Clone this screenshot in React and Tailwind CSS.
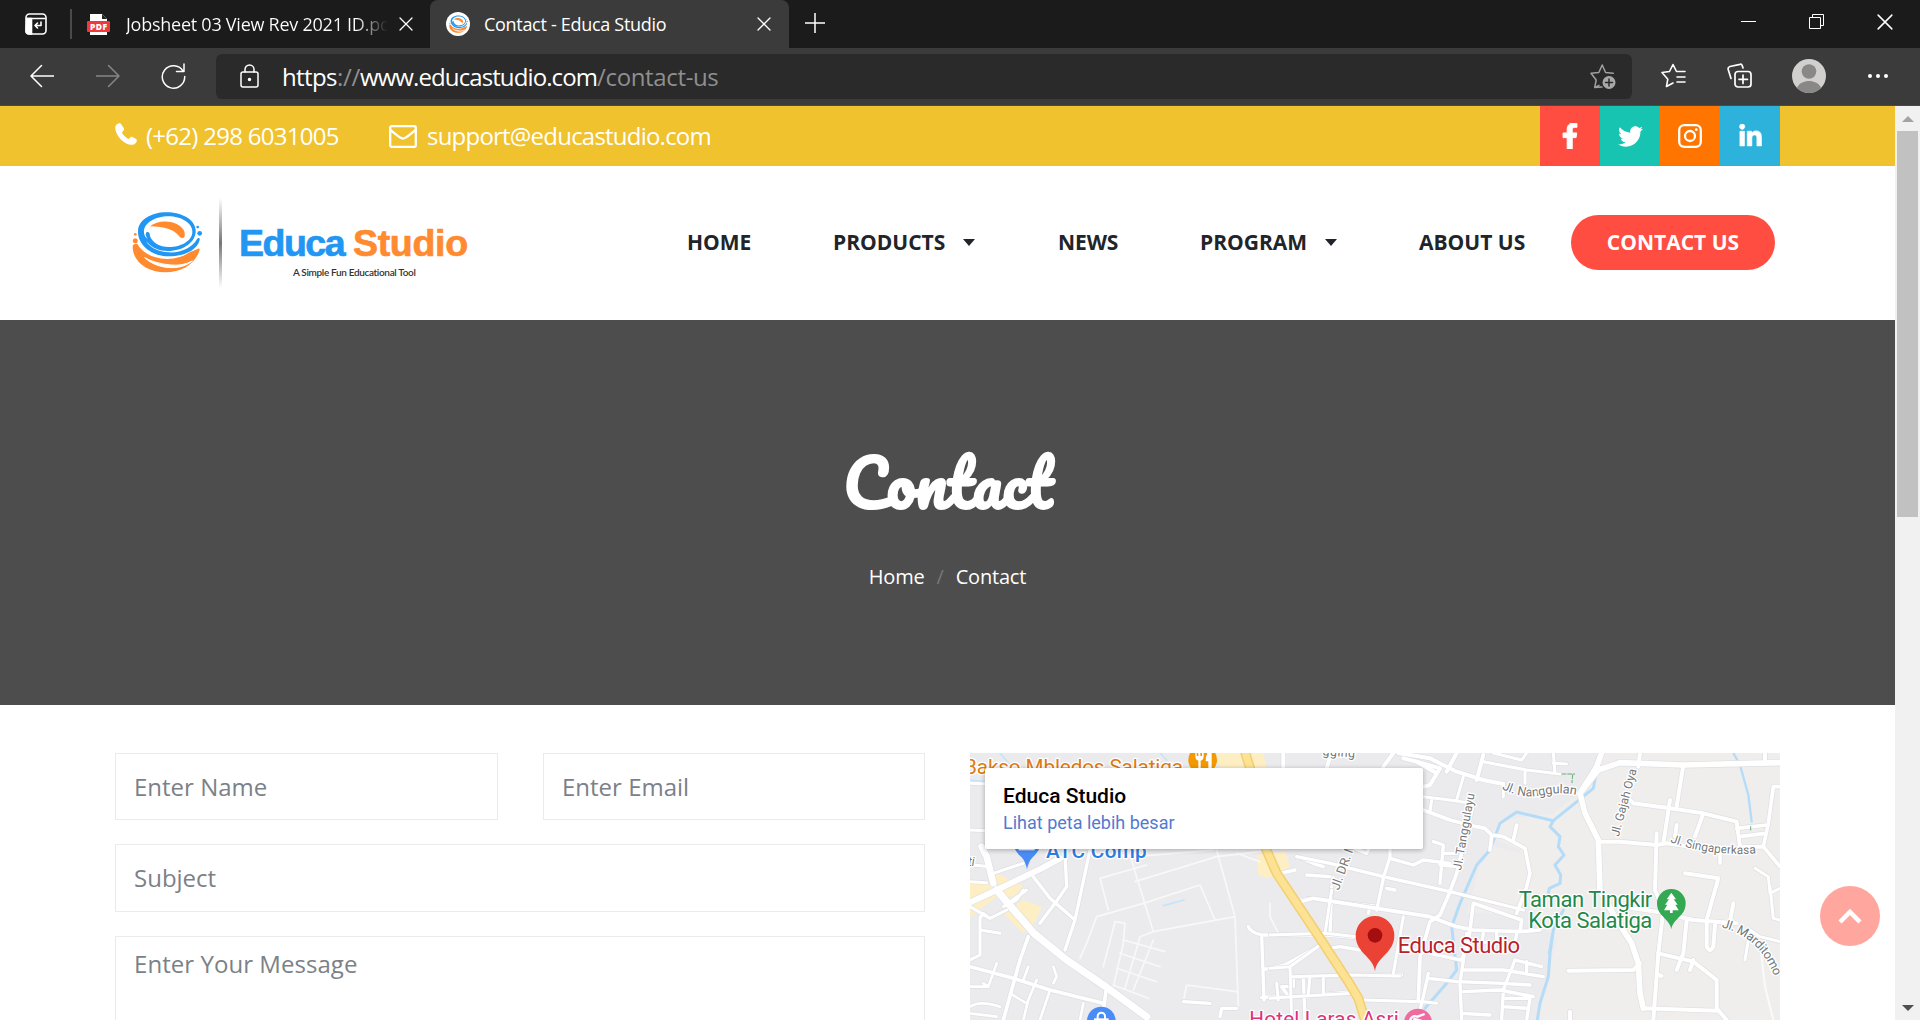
import React from "react";
import { FaFacebookF, FaTwitter, FaLinkedinIn } from "react-icons/fa";

/* ---------- logo ---------- */

function Swirl({ className }) {
  return (
    <svg viewBox="36 32 214 186" className={className} fill="none" preserveAspectRatio="none">
      <path d="M38 138C38 186 84 216 136 216c52 0 92-26 104-68 0-4-4-4-8-1-20 10-50 18-82 16-40 0-70-12-84-26-8-8-26-10-28 1z" fill="#ff8a30" />
      <path d="M74 172c22 20 52 30 82 30 24 0 44-6 62-20-18 10-40 14-64 12-30-2-58-10-80-22z" fill="#fff" stroke="#fff" strokeWidth="3" />
      <ellipse cx="142" cy="102" rx="98" ry="74" fill="#fff" />
      <path d="M90 78c18-14 42-17 66-12 26 6 42 24 39 40-2 10-12 8-18 0-16-19-42-27-87-28z" fill="#ff8a30" />
      <g fill="#2196f3">
        <path fillRule="evenodd" d="M140 36C92 36 54 60 54 94c0 42 45 74 92 74 48 0 88-20 94-50 1-6-5-7-8-2-14 26-48 42-86 40-30-1-56-14-68-34 20 22 40 30 66 30 46 0 84-26 84-60 0-34-42-56-88-56zm6 12c38 0 72 20 72 46 0 26-32 46-72 46-26 0-50-14-56-34 0-8-3-12-8-11-7 2-6 12 2 22-8-6-12-14-12-23 0-26 34-46 74-46z" />
        <circle cx="240" cy="99" r="7" />
        <circle cx="234" cy="80" r="4" />
      </g>
      <circle cx="46" cy="121" r="7.500" fill="#ff8a30" />
      <circle cx="46" cy="102" r="4" fill="#ff8a30" />
    </svg>
  );
}

/* ---------- browser chrome ---------- */

const line = { fill: "none", stroke: "currentColor", strokeLinecap: "round", strokeLinejoin: "round" };

function CloseX({ size }) {
  return (
    <svg width={size} height={size} viewBox="0 0 14 14" strokeWidth="1.3" {...line}>
      <path d="M1 1l12 12M13 1L1 13" />
    </svg>
  );
}

function TabBar() {
  return (
    <div className="flex h-12 items-center bg-[#1b1b1b] text-white">
      <svg className="ml-[25px] shrink-0" width="22" height="22" viewBox="0 0 22 22" strokeWidth="1.6" {...line}>
        <rect x="1" y="1" width="20" height="20" rx="3.5" />
        <path d="M2 5.5h18" />
        <path d="M2 5.5h4.5V21H4a3 3 0 0 1-3-3z" fill="currentColor" />
        <path d="M16 9v3.5h-6M12.500 10l-2.500 2.500 2.500 2.500" />
      </svg>
      <div className="ml-[23px] h-[30px] w-[2px] bg-[#4a4a4a]" />
      <div className="ml-[15px] flex w-[343px] items-center">
        <svg width="23" height="23" viewBox="0 0 23 23" className="shrink-0">
          <path d="M3 1h12l5 5v16H3z" fill="#fff" />
          <path d="M15 1l5 5h-5z" fill="#222" />
          <rect x="0" y="8" width="23" height="11" rx="1" fill="#ee3a3c" />
          <text x="11.500" y="16.600" textAnchor="middle" fontSize="8.500" fontWeight="800" fill="#fff" fontFamily="Open Sans, sans-serif" textLength="17">PDF</text>
        </svg>
        <div className="ml-4 w-[262px] overflow-hidden whitespace-nowrap bg-gradient-to-r from-white from-88% to-[#1b1b1b] to-100% bg-clip-text text-[18px] leading-6 tracking-[-0.25px] text-transparent">
          Jobsheet 03 View Rev 2021 ID.pdf
        </div>
        <div className="ml-[11px] shrink-0"><CloseX size={14} /></div>
      </div>
      <div className="flex h-12 w-[359px] items-center rounded-t-lg bg-[#3b3b3b]">
        <div className="ml-4 flex h-6 w-6 shrink-0 items-center justify-center rounded-full bg-white">
          <Swirl className="h-[18px] w-[19px]" />
        </div>
        <div className="ml-[14px] w-[273px] whitespace-nowrap text-[18px] leading-6 tracking-[-0.3px]">Contact - Educa Studio</div>
        <CloseX size={14} />
      </div>
      <svg className="-mt-[2px] ml-4" width="20" height="20" viewBox="0 0 20 20" strokeWidth="1.500" {...line}>
        <path d="M10 0v20M0 10h20" />
      </svg>
      <div className="mr-[27px] ml-auto flex items-center gap-[53px] pb-[5px]">
        <div className="h-px w-[15px] bg-white" />
        <svg width="15" height="15" viewBox="0 0 15 15" fill="none" stroke="#fff" strokeWidth="1">
          <path d="M.5 3.500h11v11H.5zM3.500 3V.5h11v11H12" />
        </svg>
        <CloseX size={16} />
      </div>
    </div>
  );
}

function Toolbar() {
  return (
    <div className="flex h-[58px] items-center border-b border-[#4a4a45] bg-[#3b3b3b] pb-[2px] text-white">
      <svg className="ml-[30px]" width="24" height="24" viewBox="0 0 24 24" strokeWidth="1.500" {...line}>
        <path d="M24 12H1M11.500 1.500L1 12l10.500 10.500" />
      </svg>
      <svg className="ml-[42px] text-[#868686]" width="24" height="24" viewBox="0 0 24 24" strokeWidth="1.500" {...line}>
        <path d="M0 12h23M12.500 1.500L23 12 12.500 22.500" />
      </svg>
      <svg className="ml-[41px]" width="25" height="26" viewBox="0 0 25 26" strokeWidth="1.500" {...line}>
        <path d="M22 8A11.200 11.200 0 1 0 23.700 13.500M23 1v7.500h-7.500" />
      </svg>
      <div className="mt-[1px] ml-[30px] flex h-[45px] w-[1416px] items-center rounded-md bg-[#2a2a2a]">
        <svg className="ml-6" width="19" height="24" viewBox="0 0 19 24" strokeWidth="1.500" {...line}>
          <rect x="1" y="8" width="17" height="15" rx="2" />
          <path d="M5 8V5.500a4.500 4.500 0 0 1 9 0V8" />
          <circle cx="9.500" cy="15.500" r="1" fill="currentColor" />
        </svg>
        <div className="mt-[2px] ml-[23px] whitespace-nowrap text-[24px] leading-8 text-[#8f8f8f]">
          <span className="tracking-[-0.6px] text-white">https</span>
          <span className="tracking-[-0.3px]">://</span>
          <span className="tracking-[-0.9px] text-white">www.educastudio.com</span>
          <span className="tracking-[-0.35px]">/contact-us</span>
        </div>
        <svg className="mt-[2px] mr-4 ml-auto text-[#a0a0a0]" width="26" height="26" viewBox="0 0 26 26" strokeWidth="1.500" {...line}>
          <path d="M12 23l-7.300.5 1.500-7.500L1 9.300l7.800-.8L12.200 1l3.400 7.500 7.600.8M5 23.500l4-2.200" />
          <circle cx="19" cy="18.500" r="6.500" fill="#a8a8a8" stroke="none" />
          <path d="M19 15v7M15.500 18.500h7" stroke="#2a2a2a" />
        </svg>
      </div>
      <svg className="ml-[29px]" width="25" height="25" viewBox="0 0 25 25" strokeWidth="1.600" {...line}>
        <path d="M12 20l-6.500 3.500 1.300-7.300L1 9.500l7.500-1L12 1.500l3.500 7H24M16 14h8M16 19h8" />
      </svg>
      <svg className="ml-[41px]" width="25" height="25" viewBox="0 0 25 25" strokeWidth="1.700" {...line}>
        <rect x="8" y="8.500" width="16" height="15.500" rx="3" />
        <path d="M16 12v8.500M12 16.300h8.500M16 5l-.8-2.500c-.4-1-1-1.500-2.200-1.200L3 3.500C1.500 4 .8 5 1.200 6.500L4 15.500" />
      </svg>
      <svg className="ml-[40px]" width="34" height="34" viewBox="0 0 34 34">
        <circle cx="17" cy="17" r="17" fill="#d2d0ce" />
        <circle cx="17" cy="12.500" r="7.300" fill="#8a8886" />
        <path d="M5 29c2-5 7-7 12-7s10 2 12 7a17 17 0 0 1-24 0z" fill="#8a8886" />
      </svg>
      <div className="ml-[42px] flex gap-1">
        <span className="h-1 w-1 rounded-full bg-white" />
        <span className="h-1 w-1 rounded-full bg-white" />
        <span className="h-1 w-1 rounded-full bg-white" />
      </div>
    </div>
  );
}

/* ---------- site header ---------- */

function TopBar() {
  return (
    <div className="flex h-[60px] items-center bg-[#f0c22e] pr-[115px] pl-[115px] text-[24px] text-white">
      <svg className="-mt-1" width="22" height="22" viewBox="0 0 22 22" fill="#fff">
        <path d="M5.600.6C4.900-.1 3.300.1 2.200.9.700 2.100 0 3.800.3 5.900c.5 3.700 2.900 7.900 6.100 11 3.200 3 6.700 4.800 9.800 4.900 2.200.1 4.100-.9 5.100-2.600.6-1 .7-2.300.2-2.800-.6-.6-4.100-2.500-4.900-2.600-1.100-.2-2.200 2.200-3.100 2.200-1.200 0-6.500-5-6.500-6.400 0-1 2.400-2.200 2.200-3.300C9.100 5.500 6.300 1.300 5.600.6z" />
      </svg>
      <span className="ml-[9px] w-[243px] whitespace-nowrap tracking-[-0.72px]">(+62) 298 6031005</span>
      <svg width="28" height="23" viewBox="0 0 28 23" fill="none" stroke="#fff" strokeWidth="2.300">
        <rect x="1.200" y="1.200" width="25.600" height="20.600" rx="1.500" />
        <path d="M1.500 5c4 3 9 8.500 12.500 8.500S22.500 8 26.500 5" />
      </svg>
      <span className="ml-[10px] whitespace-nowrap tracking-[-0.78px]">support@educastudio.com</span>
      <div className="ml-auto flex">
        <a className="flex h-[60px] w-[60px] items-center justify-center bg-[#ff4d41]"><FaFacebookF className="h-[26px] w-[26px] stroke-white stroke-[18px]" /></a>
        <a className="flex h-[60px] w-[60px] items-center justify-center bg-[#17c4b2]"><FaTwitter className="h-[25px] w-[25px]" /></a>
        <a className="flex h-[60px] w-[60px] items-center justify-center bg-[#ff7500]">
          <svg width="24" height="24" viewBox="0 0 24 24" fill="none" stroke="#fff" strokeWidth="2.300">
            <rect x="1.200" y="1.200" width="21.600" height="21.600" rx="5" />
            <circle cx="12" cy="12" r="5" />
            <circle cx="18.300" cy="5.700" r="1.400" fill="#fff" stroke="none" />
          </svg>
        </a>
        <a className="flex h-[60px] w-[60px] items-center justify-center bg-[#2db2dc]"><FaLinkedinIn className="mt-px h-[25px] w-[25px] stroke-white stroke-[14px]" /></a>
      </div>
    </div>
  );
}

function Caret() {
  return <span className="ml-[18px] border-x-[6.5px] border-t-[7px] border-x-transparent border-t-[#212529]" />;
}

function NavBar() {
  return (
    <div className="flex h-[154px] items-center bg-white pl-[132px] text-[21px] font-bold whitespace-nowrap text-[#212529]">
      <Swirl className="-mt-[2px] h-[62px] w-[71px]" />
      <div className="ml-[16px] h-[90px] w-[3px] bg-gradient-to-b from-transparent via-[#777] to-transparent" />
      <div className="ml-[17px] w-[233px] pt-[15px] font-[Liberation_Sans]">
        <div className="text-[37.5px] leading-[39px] tracking-[-1.5px] text-[#2196f3] [-webkit-text-stroke:0.7px_currentColor]">
          Educa <span className="tracking-[-0.3px] text-[#ff8a30]">Studio</span>
        </div>
        <div className="mt-[3px] -mb-px ml-[54px] font-['Lato'] text-[10px] leading-3 font-semibold tracking-[-0.34px] text-[#333]">
          A Simple Fun Educational Tool
        </div>
      </div>
      <div className="ml-[215px] flex items-center pb-px">
        <span className="w-[146px]">HOME</span>
        <span className="flex w-[225px] items-center">PRODUCTS<Caret /></span>
        <span className="w-[142px] tracking-[-0.1px]">NEWS</span>
        <span className="flex w-[219px] items-center">PROGRAM<Caret /></span>
        <span className="w-[152px]">ABOUT US</span>
        <a className="flex h-[55px] w-[204px] items-center justify-center rounded-full bg-[#ff4d41] text-white">CONTACT US</a>
      </div>
    </div>
  );
}

function Hero() {
  return (
    <div className="flex h-[385px] flex-col items-center bg-[#4d4d4d] text-white">
      <h1 className="mt-[120px] h-[84px] pl-px font-['Pacifico','Lato'] text-[64px] leading-[84px] font-bold">Contact</h1>
      <div className="mt-[38px] flex text-[20px] leading-[30px] tracking-[-0.2px]">
        <span>Home</span>
        <span className="mx-[12px] text-[#777]">/</span>
        <span>Contact</span>
      </div>
    </div>
  );
}

/* ---------- map ---------- */

const WEST_ROADS = [
  [18, "M20 492L110 450L245 385L300 355"],
  [22, "M110 450L222 580L320 660L440 742L560 830"],
  [20, "M65 320L80 350L100 430"],
  [9, "M30 130L85 132M30 270L80 272M40 375L90 380M30 425L80 428"],
  [10, "M390 330L345 540L315 630M220 410L270 475L345 540M315 340L320 440L285 490L240 550"],
  [9, "M60 530L60 645L30 660M60 570L120 580M30 500L90 535L140 510M90 535L70 520L60 535M100 400L190 370M190 450L170 480L130 500L200 450"],
  [11, "M205 590L180 660L130 840M30 680L160 715L270 750L430 790M440 740L430 810"],
  [8, "M110 670L85 740L70 730M30 740L85 740M205 680L190 720M280 680L290 710L280 730M150 760L200 790M230 720L205 780L190 840M270 750L240 840M30 800Q60 780 120 800M30 820L110 830M370 790L360 840"],
  [10, "M865 560Q870 575 905 585L1100 585L1180 592M905 585L912 780M912 688L975 675L1090 610M985 680L1000 715L1000 740L965 740L990 775M1000 712L1180 705L1325 705M1030 715L1035 840M1090 712L1090 755M905 772L1040 768L1180 755M950 735L955 770M1110 625L1140 620L1200 630M670 785L750 790M780 830L785 805L830 805"],
  [10, "M1015 350L1060 370L1090 380M1045 405L1120 412M1020 480L1050 475L1100 482L1260 500M1115 440L1110 585M960 400L1005 390M1230 500L1225 520"],
];

const WEST_LANES = "M390 340L525 350L760 330M510 345L580 575M420 415L560 375M420 415L445 510M525 425L770 350L900 335M410 530L550 490L720 435L765 540M580 575L825 530M770 330L825 530L835 800M410 530L380 610L360 655M465 545L495 550L490 610L460 740M465 545L430 680M490 600L615 635M480 640L600 680M470 685L590 725M460 735L565 775M580 575L540 590L495 745M580 600L520 750M680 735L830 755M680 735L670 785M930 490L930 530L955 580M900 365L830 340M355 680L360 700";

const EAST_ROADS = [
  [12, "M385 39L480 55L560 95L640 120L700 132M400 55L440 65L510 85L480 135L440 145M440 65L500 100M640 45L620 120M560 39L530 95M370 39L340 80M180 50L170 85M40 40L40 85"],
  [9, "M640 65L770 90L870 102M670 39L755 60L770 39M850 39L855 100M850 70L890 72M765 90L765 130M460 170L540 180L600 190M580 110L560 180M485 180L480 215M700 130L700 170"],
  [11, "M460 210L540 240L620 260L645 265L665 285L660 330M665 285L700 290L765 325L780 400L770 440L740 520M740 255L730 300M610 190L560 400L540 455L510 525L480 545L450 650L445 780"],
  [10, "M80 350L180 370L340 410L540 455L760 510M110 405L180 410M360 350L340 415L320 510M360 325L360 355L430 375L460 360L540 370M490 305L520 315L510 430M520 340L560 340M510 375L570 380M350 445L375 450M240 320L290 340L300 320"],
  [11, "M90 485L130 475L320 505L480 530L560 560L610 570L750 575L755 540L610 490M610 490L595 610L575 660M810 570L750 575"],
  [9, "M185 450L165 580L260 590M0 585L165 580M400 530L370 700M60 680L65 840M0 685L60 680L150 615M65 710L240 705L390 708M65 770L250 760M120 710L115 760M160 710L160 760M20 730L25 780M0 775L65 770M280 780L460 785L500 790"],
  [10, "M385 620L480 640L580 662M580 662L570 730L575 840M475 700L460 770L445 830M475 715L560 725L700 730M580 690L700 690L820 710M580 755L690 750L790 770M590 580L580 660M640 580L635 610M680 580L680 610L610 605M735 660L815 680M735 660L700 750L695 840M770 665L770 700M700 730L780 735M700 775L780 775L770 840M700 800L770 805M575 820L660 825M740 580L735 610"],
  [17, "M995 39L980 80L930 160L945 220L985 300L990 450L1040 540L1085 610L1105 670L1110 760L1120 805M930 160L985 90L1050 68L1240 75L1530 68"],
  [12, "M985 305L1050 305L1160 315L1190 310L1260 320M1080 180L1090 190L1200 205L1300 220L1400 245L1410 320L1480 320M1240 75L1220 200M1110 39L1105 80M1200 180L1180 310M1160 280L1155 450L1180 510L1165 640L1150 840M1300 220L1275 290M1220 255L1215 290M1485 39L1485 70"],
  [11, "M1530 140L1510 140L1495 250L1480 320L1530 380M1400 265L1490 255M1410 290L1485 280M1350 320L1350 370"],
  [12, "M1060 500L1160 515L1270 540L1400 550M1245 400L1345 415L1310 540L1310 620Q1320 640 1330 620L1335 555M1250 540L1240 640L1220 690M1390 490L1380 545M1165 640L1270 665L1340 720L1340 805L1370 840M1270 660L1260 690M1120 805L1340 812M1110 670L1090 690L895 692M1165 705L1175 708M900 815L900 840"],
  [9, "M1455 385L1495 410L1500 460L1530 445M1500 440L1510 535L1530 540M1440 570L1425 660M1440 570L1470 590L1530 605"],
];

function Roads({ items }) {
  return (
    <>
      {items.map(([w, d]) => <path key={"e" + d} d={d} stroke="#dedfe3" strokeWidth={w + 4} />)}
      {items.map(([w, d]) => <path key={d} d={d} stroke="#fff" strokeWidth={w} />)}
    </>
  );
}

const halo = { stroke: "#fff", strokeWidth: 8, paintOrder: "stroke", strokeLinejoin: "round" };

function MapView() {
  return (
    <svg width="810" height="267" viewBox="30 39 2430 801" className="block" fontFamily="Roboto, sans-serif">
      <rect x="30" y="39" width="2430" height="801" fill="#ebebed" />
      <path d="M1930 39H2460V840H1730L1790 600L1710 510L1710 400L1680 330L1590 290L1620 240L1780 220L1870 150Z" fill="#efeeec" />
      <path d="M1520 520L1560 380L1600 320L1690 340L1710 440L1660 520Z" fill="#efeeec" />
      <g fill="#fdefc3">
        <path d="M30 430L80 425L110 400L190 440L160 470L110 470L30 530Z" />
        <path d="M130 520L190 480L245 500L225 545L190 580Z" />
        <path d="M770 39H910L920 84H780ZM890 345L975 335L990 380L925 415L895 405Z" />
      </g>
      <g fill="none" strokeLinecap="round" strokeLinejoin="round">
        <path d={WEST_LANES} stroke="#f8f8f9" strokeWidth="5" />
        <path d="M610 497L672 480M30 120L75 125M120 39L150 75M600 39L620 60" stroke="#c5e4fb" strokeWidth="5" />
        <g transform="translate(930 0)">
          <g stroke="#b4dcf8" strokeWidth="9">
            <path d="M990 39L970 145L850 242L740 216L690 250L660 330L620 375L570 490L545 560L560 690L530 730L465 805" />
            <path d="M850 242L840 260L870 290L865 320L882 345L855 375L872 405L870 430L838 445L835 458M880 510L850 570L840 640L835 710L810 790L802 840M850 570L838 640" />
            <path d="M1390 39L1410 75L1435 165L1445 245" strokeWidth="7" />
          </g>
          <path d="M1470 610L1485 740L1510 840" stroke="#fafafa" strokeWidth="6" />
        </g>
        <Roads items={WEST_ROADS} />
        <g transform="translate(930 0)"><Roads items={EAST_ROADS} /></g>
        <path d="M850 20L870 84L915 320L950 400L1080 595L1165 725L1195 775L1215 840" stroke="#f2cf70" strokeWidth="30" />
        <path d="M850 20L870 84L915 320L950 400L1080 595L1165 725L1195 775L1215 840" stroke="#fde293" strokeWidth="21" />
        <path d="M1806 102h38M1838 104l-2 24M2372 260v10" stroke="#68ad7c" strokeWidth="3" strokeDasharray="12 5" />
      </g>

      <g fontSize="36" fill="#747678" {...halo}>
        <text fontStyle="italic" x="24" y="378">ti</text>
        <text x="1087" y="46" transform="rotate(4 1087 46)" fontSize="38" textLength="98">gging</text>
        <text transform="translate(1136 452) rotate(-70)" fontSize="38">Jl. DR. Muwardi</text>
        <text transform="translate(1503 392) rotate(-80)" textLength="234">Jl. Tanggulayu</text>
        <text transform="translate(1976 291) rotate(-75)" textLength="208">Jl. Gajah Oya</text>
        <path id="nanggulan" d="M1625 147Q1690 178 1745 166T1852 166" fill="none" stroke="none" />
        <path id="singaperkasa" d="M2130 306Q2250 350 2395 340" fill="none" stroke="none" />
        <path id="marditomo" d="M2284 562Q2400 590 2446 716" fill="none" stroke="none" />
        <text fontSize="38"><textPath href="#nanggulan" textLength="228">Jl. Nanggulan</textPath></text>
        <text><textPath href="#singaperkasa" textLength="262">Jl. Singaperkasa</textPath></text>
        <text fontSize="38"><textPath href="#marditomo" textLength="226">Jl. Marditomo</textPath></text>
      </g>

      <g {...halo}>
        <text x="12" y="103" fontSize="62" fill="#dd7b14" textLength="657">Bakso Mbledos Salatiga</text>
        <text x="258" y="353" fontSize="62" fontWeight="500" fill="#2f7de1" textLength="302">ATC Comp</text>
        <text x="868" y="858" fontSize="62" fill="#e0307a" textLength="448">Hotel Laras Asri</text>
        <text x="1313" y="638" fontSize="66" fill="#b8232a" textLength="367">Educa Studio</text>
        <text x="1676" y="501" fontSize="66" fill="#23884a" textLength="401">Taman Tingkir</text>
        <text x="1705" y="564" fontSize="66" fill="#23884a" textLength="372">Kota Salatiga</text>
      </g>

      <circle cx="728" cy="60" r="43" fill="#f29900" />
      <path d="M706 30v18q0 12 9 14v24h7V62q9-2 9-14V30h-5v18h-5V30h-6v18h-5V30zM755 30q-18 4-18 34h8v22h10z" fill="#fff" />
      <path d="M160 318Q170 340 185 352Q196 364 201 388Q206 364 218 352Q232 340 242 318Z" fill="#4a8cf6" />
      <path d="M176 318h48v13h-48z" fill="#fff" />
      <circle cx="424" cy="843" r="43" fill="#4a8cf6" />
      <path d="M402 835h44v12h-44z" fill="#fff" />
      <path d="M413 837v-8a11 11 0 0 1 22 0v8" fill="none" stroke="#fff" strokeWidth="6" />
      <circle cx="1374" cy="848" r="42" fill="#f06ba0" />
      <path d="M1350 842q5-18 22-12l22-8M1360 836l30 8" stroke="#fff" strokeWidth="7" fill="none" />

      <path d="M1245 694C1240 650 1187 640 1187 586a58 58 0 0 1 116 0C1303 640 1250 650 1245 694Z" fill="#ea4335" />
      <circle cx="1245" cy="586" r="22" fill="#a50e0e" />
      <path d="M2134 568C2129 535 2091 530 2091 490a43 43 0 0 1 86 0C2177 530 2139 535 2134 568Z" fill="#34a853" />
      <path d="M2134 458l14 20h-7l12 16h-7l10 17h-18v8h-8v-8h-18l10-17h-7l12-16h-7z" fill="#fff" />
    </svg>
  );
}

/* ---------- contact section ---------- */

function ContactSection() {
  const field = "flex items-center border border-[#ebebeb] pl-[18px]";
  return (
    <div className="flex h-[315px] overflow-hidden bg-white pt-12 pl-[115px]">
      <div className="w-[810px] text-[24px] text-[#7b8187]">
        <div className="flex gap-[45px]">
          <div className={field + " h-[67px] w-[383px]"}>Enter Name</div>
          <div className={field + " h-[67px] w-[382px]"}>Enter Email</div>
        </div>
        <div className={field + " mt-6 h-[68px]"}>Subject</div>
        <div className="mt-6 h-[200px] border border-[#ebebeb] pt-[9px] pl-[18px] leading-9 tracking-[0.05px]">Enter Your Message</div>
      </div>
      <div className="relative ml-[45px] h-[267px] w-[810px]">
        <MapView />
        <div className="absolute top-[15px] left-[15px] h-[81px] w-[438px] rounded-[2px] bg-white pt-[14px] pl-[18px] font-[Roboto] shadow-[0_1px_5px_rgba(0,0,0,0.3)]">
          <div className="text-[21px] leading-7 font-medium text-black">Educa Studio</div>
          <div className="text-[18px] leading-[26px] text-[#5379d0]">Lihat peta lebih besar</div>
        </div>
      </div>
      <div className="mt-[133px] ml-[40px] flex h-[60px] w-[60px] items-center justify-center rounded-full bg-[#ffa69f]">
        <svg width="24" height="16" viewBox="0 0 24 16" fill="none" stroke="#fff" strokeWidth="4.500">
          <path d="M2 14L12 4l10 10" />
        </svg>
      </div>
    </div>
  );
}

function ScrollBar() {
  return (
    <div className="flex w-[25px] flex-col items-center bg-[#f1f1f1]">
      <div className="mt-[10px] border-x-[6px] border-b-[6px] border-x-transparent border-b-[#a3a3a3]" />
      <div className="mt-[9px] h-[386px] w-[21px] bg-[#c1c1c1]" />
      <div className="mt-auto mb-[9px] border-x-[6px] border-t-[6px] border-x-transparent border-t-[#505050]" />
    </div>
  );
}

export default function App() {
  return (
    <div className="h-[1020px] w-[1920px] overflow-hidden bg-white font-['Open_Sans',sans-serif]">
      <TabBar />
      <Toolbar />
      <div className="flex h-[914px]">
        <div className="w-[1895px]">
          <TopBar />
          <NavBar />
          <Hero />
          <ContactSection />
        </div>
        <ScrollBar />
      </div>
    </div>
  );
}
